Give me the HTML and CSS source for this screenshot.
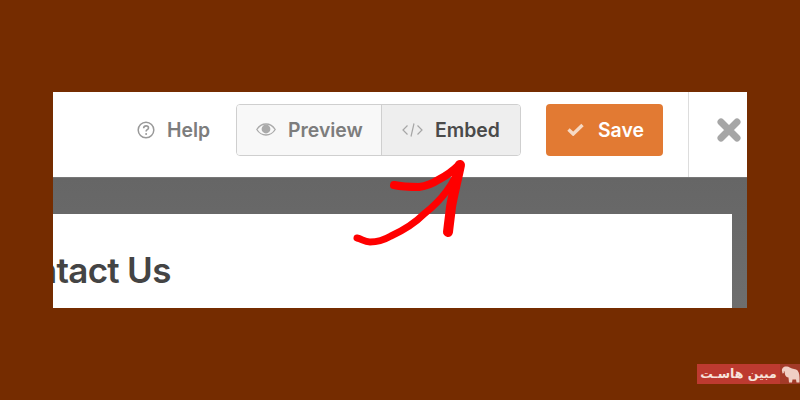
FILE: index.html
```html
<!DOCTYPE html>
<html lang="en">
<head>
    <meta charset="UTF-8">
    <title>Embed</title>
    <link rel="stylesheet" href="styles.css">
</head>
<body>
    <div class="frame">
        <!-- Верхняя панель -->
        <div class="toolbar">
            <a class="help">
                <svg class="help-icon" width="18" height="18" viewBox="0 0 18 18">
                    <circle cx="9" cy="9" r="7.8" fill="none" stroke="#999" stroke-width="1.5"/>
                    <path d="M6.6 7.2c.1-1.5 1.1-2.3 2.5-2.3s2.4.8 2.4 2c0 1.9-2.4 1.7-2.4 3.5" fill="none" stroke="#999" stroke-width="1.6"/>
                    <circle cx="9.1" cy="12.9" r="1" fill="#999"/>
                </svg>
                Help
            </a>
            <div class="btn-group">
                <a class="tab tab-preview">
                    <svg width="20" height="13" viewBox="0 0 20 13">
                        <path d="M.8 6.500C3 3 6 1 10 1s7 2 9.200 5.500C17 10 14 12 10 12S3 10 .8 6.500z" fill="none" stroke="#aaa" stroke-width="1.300"/>
                        <circle cx="10" cy="6" r="4.400" fill="#aaa"/>
                    </svg>
                    Preview
                </a>
                <a class="tab tab-embed">
                    <svg width="21" height="14" viewBox="0 0 21 14">
                        <path d="M5.500 2.500L1 7l4.500 4.500M15.500 2.500L20 7l-4.500 4.500M12 .5L9 13.500" fill="none" stroke="#a6a6a6" stroke-width="1.200"/>
                    </svg>
                    Embed
                </a>
            </div>
            <a class="save">
                <svg width="17" height="13" viewBox="0 0 17 13">
                    <path d="M1.500 6.500L6.200 11 15.500 2" fill="none" stroke="#f6d9c4" stroke-width="3.400"/>
                </svg>
                Save
            </a>
            <div class="close">
                <svg width="24" height="24" viewBox="0 0 24 24">
                    <path d="M4 4l16 16M20 4L4 20" fill="none" stroke="#a6a6a6" stroke-width="7" stroke-linecap="round"/>
                </svg>
            </div>
        </div>
        <!-- Серая область с формой -->
        <div class="canvas">
            <div class="card">
                <h1>Contact Us</h1>
            </div>
        </div>
    </div>

    <!-- Стрелка поверх скриншота -->
    <svg class="arrow" width="140" height="100" viewBox="0 0 140 100">
        <g fill="none" stroke="#ff0000" stroke-linecap="round" stroke-linejoin="round">
            <path d="M17 88c5 1 7 4 13 4 7 0 14-2 21-6 13-6 24-13 33-22 14-11 29-26 36-49" stroke-width="7"/>
            <path d="M54 35c9 2 17 2 25 2 7-1 13-3 19-7 8-4 15-9 21-15" stroke-width="8"/>
            <path d="M120 15c-3 15-7 30-9 42-1 9-2 16-3 25" stroke-width="10"/>
        </g>
    </svg>

    <!-- Логотип внизу справа -->
    <div class="brand">
        <span class="brand-name">مبین هاسـت</span>
        <span class="brand-logo">
            <svg width="19" height="19" viewBox="0 0 19 19">
                <path d="M1 6C.5 3 3 1 6 1.500c2 .3 3.500 1.500 5 2l4 1c2.500 1 3.500 4 3.500 8v5h-3l-.5-3h-3.500l-.5 3H8l-.5-5C6 12.500 4.500 11.500 4 9.500L3.500 6.500C3 6 2.500 6.500 3 8L1.500 8.500z" fill="#f0cfc4"/>
            </svg>
        </span>
    </div>
</body>
</html>
```

FILE: styles.css
```css
* {
    margin: 0;
    padding: 0;
    box-sizing: border-box;
}

body {
    font-family: 'Inter', 'Liberation Sans', sans-serif;
    height: 100vh;
    display: flex;
    justify-content: center;
    align-items: center;
    overflow: hidden;
    position: relative;
    background-color: #752c00;
}

.frame {
    width: 694px;
    height: 216px;
    overflow: hidden;
    background-color: #fff;
}

.toolbar {
    height: 85px;
    display: flex;
    align-items: center;
    padding-left: 84px;
    padding-bottom: 10px;
}

.help {
    display: flex;
    align-items: center;
    gap: 12px;
    width: 99px;
    font-size: 19.4px;
    font-weight: 600;
    color: #7d7d7d;
}

.btn-group {
    width: 285px;
    height: 52px;
    display: flex;
    border: 1px solid #cfcfcf;
    border-radius: 4px;
    overflow: hidden;
}

.tab {
    display: flex;
    align-items: center;
    font-size: 19.4px;
    font-weight: 600;
}

.tab-preview {
    width: 145px;
    gap: 12px;
    padding-left: 19px;
    background-color: #f8f8f8;
    color: #7d7d7d;
    border-right: 1px solid #cfcfcf;
}

.tab-embed {
    flex: 1;
    gap: 12px;
    padding-left: 20px;
    background-color: #eee;
    color: #4a4a4a;
}

.save {
    width: 117px;
    height: 52px;
    margin-left: 25px;
    display: flex;
    align-items: center;
    gap: 14px;
    padding-left: 21px;
    background-color: #e27a33;
    border-radius: 4px;
    color: #fff;
    font-size: 19.4px;
    font-weight: 600;
}

.close {
    align-self: stretch;
    margin-left: 25px;
    margin-bottom: -10px;
    padding-left: 28px;
    padding-bottom: 10px;
    border-left: 1px solid #ddd;
    display: flex;
    align-items: center;
}

.canvas {
    height: 131px;
    padding: 36px 15px 0 0;
    background: linear-gradient(#666, #6e6e6e);
    border-top: 1px solid #777;
}

.card {
    height: 94px;
    padding-top: 37px;
    background-color: #fff;
    overflow: hidden;
}

h1 {
    margin-left: -63px;
    font-size: 35px;
    letter-spacing: -0.7px;
    line-height: 38px;
    font-weight: 600;
    color: #444;
    white-space: nowrap;
}

.arrow {
    position: absolute;
    left: 340px;
    top: 150px;
}

.brand {
    position: absolute;
    left: 697px;
    top: 364px;
    width: 103px;
    height: 20px;
    display: flex;
    background-color: #a33a28;
}

.brand-name {
    width: 83px;
    background-color: #bd3a30;
    color: #f7e4dc;
    font-family: 'DejaVu Sans', sans-serif;
    font-size: 12.5px;
    font-weight: 700;
    line-height: 20px;
    text-align: center;
    white-space: nowrap;
}

.brand-logo {
    flex: 1;
    display: flex;
    justify-content: center;
    align-items: center;
}
```
